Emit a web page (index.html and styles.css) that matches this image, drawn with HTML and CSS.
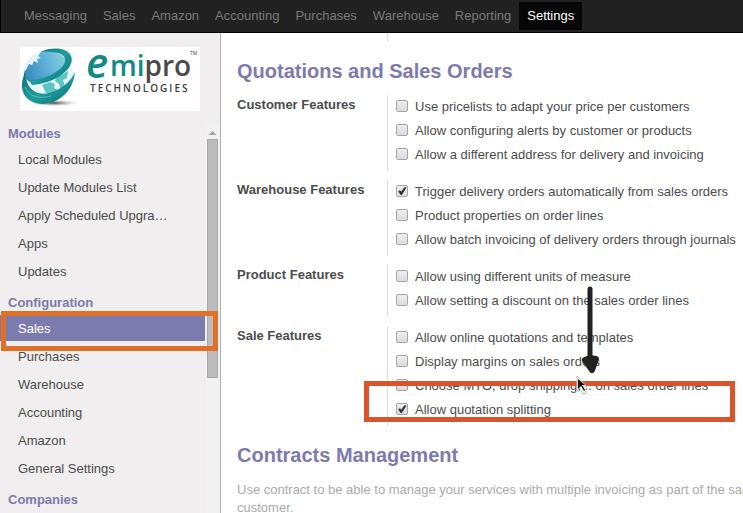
FILE: index.html
```html
<!DOCTYPE html>
<html lang="en">
<head>
<meta charset="utf-8">
<title>Settings - Sales</title>
<link rel="stylesheet" href="styles.css">
</head>
<body>
<nav class="topbar">
  <a href="#">Messaging</a>
  <a href="#">Sales</a>
  <a href="#">Amazon</a>
  <a href="#">Accounting</a>
  <a href="#">Purchases</a>
  <a href="#">Warehouse</a>
  <a href="#">Reporting</a>
  <a href="#" class="active">Settings</a>
</nav>
<div class="layout">
  <aside class="sidebar">
    <a class="logo" href="#">
      <svg width="180" height="64" viewBox="0 0 180 64" role="img" aria-label="emipro Technologies">
        <defs>
          <linearGradient id="globe" x1="0" y1="0.6" x2="1" y2="0.2">
            <stop offset="0" stop-color="#2f86b8"/>
            <stop offset="0.5" stop-color="#5fb0d8"/>
            <stop offset="1" stop-color="#8fd6de"/>
          </linearGradient>
          <linearGradient id="ring" x1="0" y1="0" x2="1" y2="1">
            <stop offset="0" stop-color="#0c6f78"/>
            <stop offset="0.5" stop-color="#1f9c9b"/>
            <stop offset="1" stop-color="#08727a"/>
          </linearGradient>
          <radialGradient id="shade">
            <stop offset="0" stop-color="#444"/>
            <stop offset="1" stop-color="#fff" stop-opacity="0"/>
          </radialGradient>
        </defs>
        <rect width="180" height="64" fill="#fff"/>
        <ellipse cx="34" cy="56" rx="28" ry="4" fill="url(#shade)"/>
        <circle cx="28" cy="28" r="24" fill="url(#globe)"/>
        <path d="M6 18c3-6 8-11 15-13l-3 4 3 2-4 1 1 4-4-2-2 4-3-1-3 6-3 2z" fill="#e6f5fa"/>
        <path d="M6 32c3 4 9 5 15 4 12-2 24-9 30-18 6 12 0 27-12 32-13 6-31 3-33-18z" fill="#e9f6f9"/>
        <path d="M22 38l8-3 5 2-1 4 4 2-6 4-6-1-2-4zM36 31l12-7-1 7-4 2 2 6-4 4-2-6-4-3z" fill="#5cc4c2"/>
        <path d="M20 5C33-1 48 1 51 9c5 11-15 28-39 29L9 33c20 0 38-13 36-21C44 6 34 4 20 5z" fill="url(#ring)"/>
        <path d="M5 25C0 37 1 47 9 53c17 11 44-2 46-28-5 11-15 18-26 21C16 49 6 42 5 25z" fill="url(#ring)"/>
        <path d="M5 40c4 10 14 12 26 9" fill="none" stroke="#4dbdb8" stroke-width="1"/>
        <text class="mark-e" x="66" y="31">e</text>
        <text class="mark" x="90" y="29"><tspan class="teal">mi</tspan>pro</text>
        <text class="tm" x="170" y="8">TM</text>
        <text class="tag" x="70" y="45">TECHNOLOGIES</text>
      </svg>
    </a>
    <div class="menu-area">
      <nav class="menu">
        <h4>Modules</h4>
        <ul>
          <li><a href="#">Local Modules</a></li>
          <li><a href="#">Update Modules List</a></li>
          <li><a href="#">Apply Scheduled Upgra…</a></li>
          <li><a href="#">Apps</a></li>
          <li><a href="#">Updates</a></li>
        </ul>
        <h4>Configuration</h4>
        <ul>
          <li><a href="#" class="selected">Sales</a></li>
          <li><a href="#">Purchases</a></li>
          <li><a href="#">Warehouse</a></li>
          <li><a href="#">Accounting</a></li>
          <li><a href="#">Amazon</a></li>
          <li><a href="#">General Settings</a></li>
        </ul>
        <h4>Companies</h4>
      </nav>
      <div class="scrollbar"><i class="up"></i><i class="thumb"></i></div>
    </div>
  </aside>
  <main class="content">
    <div class="group tail"><div></div><div class="options"></div></div>
    <h2>Quotations and Sales Orders</h2>
    <section class="group">
      <h3>Customer Features</h3>
      <div class="options">
        <label><input type="checkbox">Use pricelists to adapt your price per customers</label>
        <label><input type="checkbox">Allow configuring alerts by customer or products</label>
        <label><input type="checkbox">Allow a different address for delivery and invoicing</label>
      </div>
    </section>
    <section class="group">
      <h3>Warehouse Features</h3>
      <div class="options">
        <label><input type="checkbox" checked>Trigger delivery orders automatically from sales orders</label>
        <label><input type="checkbox">Product properties on order lines</label>
        <label><input type="checkbox">Allow batch invoicing of delivery orders through journals</label>
      </div>
    </section>
    <section class="group">
      <h3>Product Features</h3>
      <div class="options">
        <label><input type="checkbox">Allow using different units of measure</label>
        <label><input type="checkbox">Allow setting a discount on the sales order lines</label>
      </div>
    </section>
    <section class="group">
      <h3>Sale Features</h3>
      <div class="options">
        <label><input type="checkbox">Allow online quotations and templates</label>
        <label><input type="checkbox">Display margins on sales orders</label>
        <label><input type="checkbox">Choose MTO, drop shipping,... on sales order lines</label>
        <label><input type="checkbox" checked>Allow quotation splitting</label>
      </div>
    </section>
    <h2>Contracts Management</h2>
    <p class="hint">Use contract to be able to manage your services with multiple invoicing as part of the same<br>customer.</p>
  </main>
</div>
<div class="callout callout-menu"></div>
<div class="callout callout-option"></div>
<svg class="pointer" width="12" height="20" viewBox="0 0 12 20" aria-hidden="true">
  <path d="M1 1v15l3-3 3 6 3-1-3-6h4z" fill="#fff" stroke="#bbb" stroke-width="1"/>
  <path d="M2 4v10l3-3 3 5 1-1-3-5h3z" fill="#111"/>
</svg>
<svg class="arrow" width="18" height="88" viewBox="0 0 18 88" aria-hidden="true">
  <path d="M8 3v70" stroke="#222" stroke-width="5" stroke-linecap="round"/>
  <path d="M3 74l7 10 4-11-6-1z" fill="#222" stroke="#222" stroke-width="6" stroke-linejoin="round"/>
</svg>
</body>
</html>
```
FILE: styles.css
```css
* { box-sizing: border-box; }

body {
  margin: 0;
  height: 100vh;
  display: flex;
  flex-direction: column;
  position: relative;
  overflow: hidden;
  background: #fff;
  color: #4c4c4c;
  font: 13px/18px "Liberation Sans", Arial, sans-serif;
}

a { color: inherit; text-decoration: none; }

h2, h3, h4, p, ul { margin: 0; padding: 0; }

.topbar {
  flex: none;
  display: flex;
  padding: 2px 15px;
  background: #212121;
  border-left: 1px solid #000;
  border-bottom: 1px solid #000;
  color: #7a7a7a;
}
.topbar a { padding: 5px 8px; line-height: 18px; }
.topbar .active { background: #070707; color: #fff; }

.layout { flex: 1; display: flex; min-height: 0; }

.sidebar {
  flex: none;
  width: 221px;
  display: flex;
  flex-direction: column;
  background: #f0eeee;
  border-right: 1px solid #afafb6;
}
.logo { display: block; margin: 14px 20px; }
.logo svg { display: block; }
.mark-e { font: italic 600 42px "Open Sans", sans-serif; fill: #118a85; }
.mark { font: 600 28px "Open Sans", sans-serif; fill: #4a4a4c; }
.mark .teal { fill: #118a85; }
.tm { font: 5px "Open Sans", sans-serif; fill: #444; }
.tag { font: 600 10px "Open Sans", sans-serif; fill: #3c3c3c; letter-spacing: 2px; }

.menu-area { flex: 1; display: flex; min-height: 0; overflow: hidden; }
.menu { flex: 1; }
.menu h4 {
  padding: 1px 8px 0;
  margin-bottom: 4px;
  font-size: 13px;
  line-height: 16px;
  color: #7c7bad;
}
.menu ul { list-style: none; margin-bottom: 10px; display: grid; gap: 2px; }
.menu li a { display: block; padding: 5px 18px 3px; }
.menu .selected { background: #7c7bad; color: #fff; }

.scrollbar {
  flex: none;
  width: 15px;
  padding: 0 2px;
  background: #f1f1f1;
}
.up {
  display: block;
  width: 8px;
  height: 4px;
  margin: 6px auto 4px;
  background: #a3a3a3;
  clip-path: polygon(50% 0, 100% 100%, 0 100%);
}
.thumb {
  display: block;
  height: 239px;
  background: #bcbcbc;
  border: 1px solid #a8a8a8;
}

.content { flex: 1; min-width: 0; padding: 0 0 0 16px; overflow: hidden; }
.content h2 {
  margin: 17px 0 12px;
  font-size: 20px;
  line-height: 24px;
  color: #7c7bad;
}
.group { display: grid; grid-template-columns: 150px 1fr; margin-bottom: 9px; }
.group h3 { font-size: 13px; line-height: 20px; }
.options {
  display: grid;
  padding: 0 0 4px 8px;
  border-left: 1px solid #ddd;
}
.tail .options { height: 9px; }
.options label {
  display: flex;
  align-items: center;
  gap: 7px;
  height: 24px;
  white-space: nowrap;
}
.options input {
  appearance: none;
  width: 12px;
  height: 12px;
  margin: 0 0 2px;
  border: 1px solid #a6a6a6;
  border-radius: 2px;
  background: linear-gradient(#ededed, #dcdcdc);
}
.options input:checked::before {
  content: "";
  display: block;
  width: 10px;
  height: 10px;
  background: #333;
  clip-path: polygon(12% 52%, 30% 42%, 42% 58%, 76% 10%, 94% 18%, 48% 90%, 36% 90%);
}
.hint { margin-top: 14px; color: #aaa; white-space: nowrap; }

.callout { position: absolute; border: 5px solid; }
.callout-menu { left: 1px; top: 311px; width: 217px; height: 40px; border-color: #e07028; }
.callout-option { left: 364px; top: 381px; width: 371px; height: 41px; border-color: #d9542b; }
.pointer { position: absolute; left: 576px; top: 375px; }
.arrow { position: absolute; left: 582px; top: 286px; }
```
